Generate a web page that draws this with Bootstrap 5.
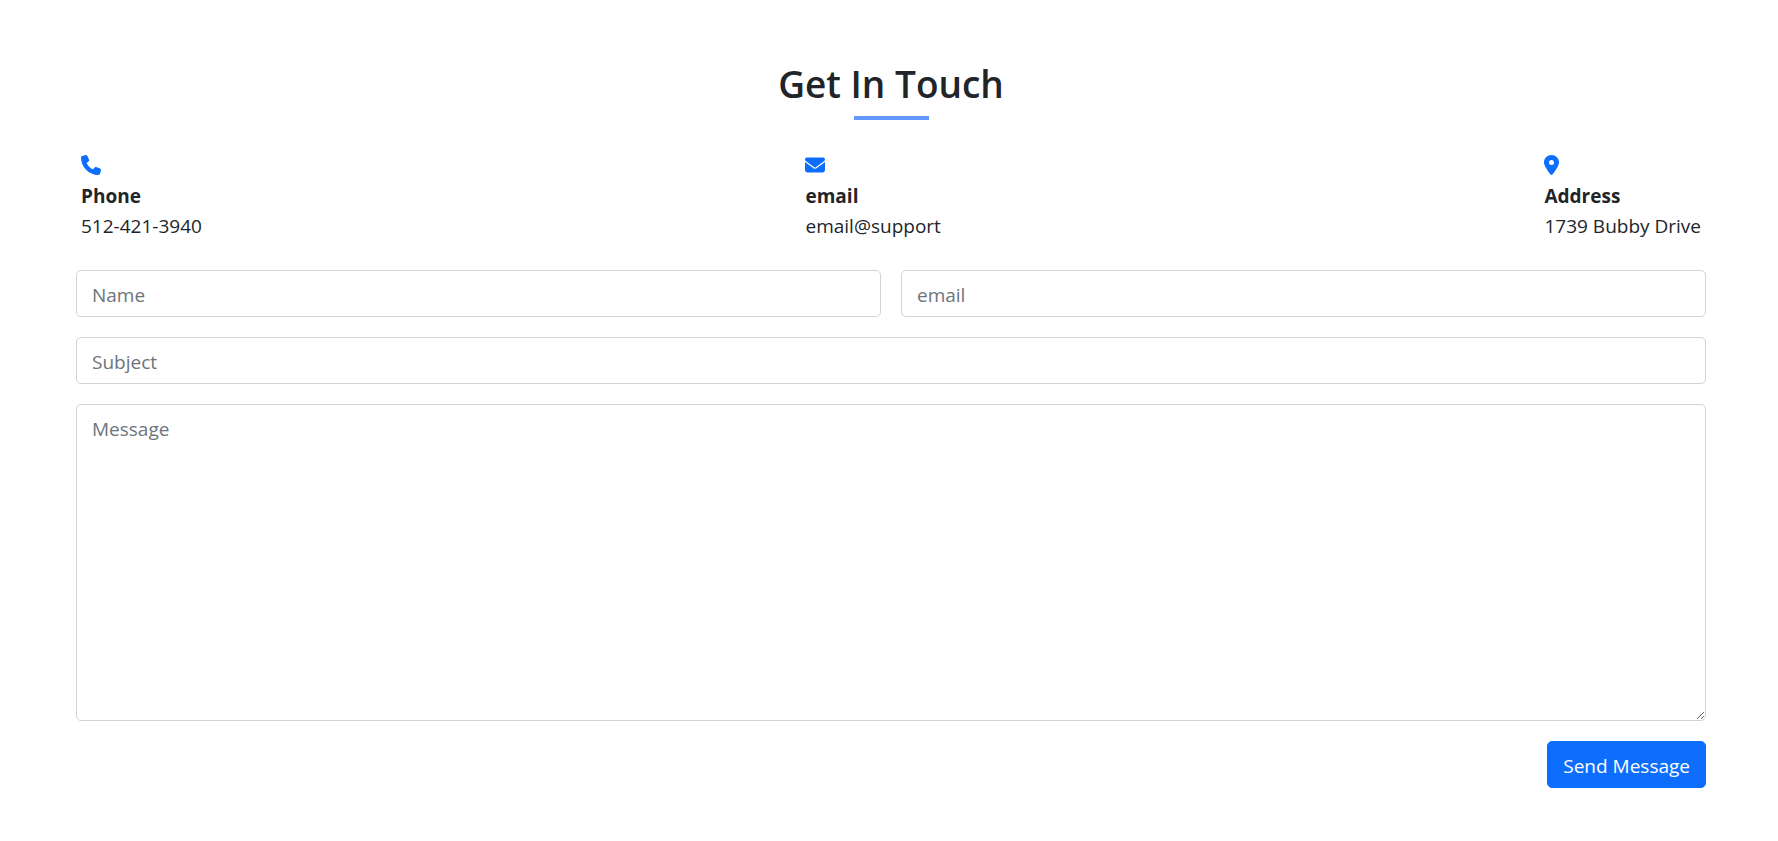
<!DOCTYPE html>
<html lang="en">
<head>
<meta charset="utf-8">
<meta name="viewport" content="width=device-width, initial-scale=1">
<title>Get In Touch</title>
<link href="https://cdn.jsdelivr.net/npm/bootstrap@5.3.0/dist/css/bootstrap.min.css" rel="stylesheet">
<style>
  html { font-size: 20px; }
  body { font-family: "Segoe UI", "Open Sans", "Noto Sans", sans-serif; font-size: 19px; line-height: 30px; color: #212529; }
  .contact { padding: 60px 72px 53px 76px; }
  .contact-title { font-size: 37px; line-height: 48px; font-weight: 600; margin-bottom: 8px; }
  .title-bar { width: 75px; height: 4px; background: #6299ff; }
  .contact-info { padding: 0 5px; margin-top: 31px; margin-bottom: 29px; }
  .contact-info svg { display: block; height: 20px; margin: 4px 0 6px; fill: #0d6efd; }
  .contact-form { display: grid; gap: 20px; }
  .contact-form .row { --bs-gutter-x: 20px; }
  .contact .form-control, .contact .btn { font-size: 19px; line-height: 30px; padding: 9px 15px 6px; border-radius: 5px; }
  .contact .form-control { border-color: #ced4da; }
  .contact .form-control::placeholder { color: #6c757d; }
</style>
</head>
<body>
<section class="contact">
  <div class="d-flex flex-column align-items-center">
    <h2 class="contact-title text-center">Get In Touch</h2>
    <div class="title-bar"></div>
  </div>
  <div class="contact-info d-flex justify-content-between">
    <div>
      <svg viewBox="0 0 512 512" aria-hidden="true"><path d="M164.900 24.600c-7.700-18.600-28-28.500-47.400-23.200l-88 24C12.100 30.200 0 46 0 64c0 247.400 200.600 448 448 448 18 0 33.800-12.100 38.600-29.500l24-88c5.300-19.400-4.600-39.700-23.200-47.400l-96-40c-16.300-6.800-35.200-2.100-46.300 11.600L304.700 368C234.300 334.700 177.300 277.700 144 207.300l49.300-40.300c13.700-11.200 18.400-30 11.600-46.300l-40-96z"/></svg>
      <div class="fw-bold">Phone</div>
      <div>512-421-3940</div>
    </div>
    <div>
      <svg viewBox="0 0 512 512" aria-hidden="true"><path d="M48 64C21.500 64 0 85.500 0 112c0 15.100 7.100 29.300 19.200 38.400l217.600 163.200c11.400 8.500 27 8.500 38.400 0l217.600-163.200c12.100-9.100 19.200-23.300 19.200-38.400 0-26.500-21.500-48-48-48H48zM0 176v208c0 35.300 28.700 64 64 64h384c35.300 0 64-28.700 64-64V176L294.400 339.200c-22.800 17.100-54 17.100-76.800 0L0 176z"/></svg>
      <div class="fw-bold">email</div>
      <div>email@support</div>
    </div>
    <div>
      <svg viewBox="0 0 384 512" aria-hidden="true"><path d="M215.700 499.200C267 435 384 279.400 384 192 384 86 298 0 192 0S0 86 0 192c0 87.400 117 243 168.300 307.200 12.300 15.300 35.100 15.300 47.400 0zM192 128a64 64 0 1 1 0 128 64 64 0 1 1 0-128z"/></svg>
      <div class="fw-bold">Address</div>
      <div>1739 Bubby Drive</div>
    </div>
  </div>
  <form class="contact-form">
    <div class="row">
      <div class="col">
        <input class="form-control" type="text" aria-label="Name" placeholder="Name">
      </div>
      <div class="col">
        <input class="form-control" type="email" aria-label="email" placeholder="email">
      </div>
    </div>
    <input class="form-control" type="text" aria-label="Subject" placeholder="Subject">
    <textarea class="form-control" rows="10" aria-label="Message" placeholder="Message"></textarea>
    <div class="d-flex justify-content-end">
      <button class="btn btn-primary" type="submit">Send Message</button>
    </div>
  </form>
</section>
<script src="https://cdn.jsdelivr.net/npm/bootstrap@5.3.0/dist/js/bootstrap.bundle.min.js"></script>
</body>
</html>
